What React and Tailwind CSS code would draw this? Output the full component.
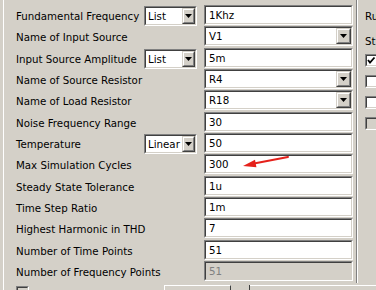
const rows = [
  { label: "Fundamental Frequency", combo: "List", value: "1Khz" },
  { label: "Name of Input Source", value: "V1", select: true },
  { label: "Input Source Amplitude", combo: "List", value: "5m" },
  { label: "Name of Source Resistor", value: "R4", select: true },
  { label: "Name of Load Resistor", value: "R18", select: true },
  { label: "Noise Frequency Range", value: "30" },
  { label: "Temperature", combo: "Linear", value: "50" },
  { label: "Max Simulation Cycles", value: "300" },
  { label: "Steady State Tolerance", value: "1u" },
  { label: "Time Step Ratio", value: "1m" },
  { label: "Highest Harmonic in THD", value: "7" },
  { label: "Number of Time Points", value: "51" },
  { label: "Number of Frequency Points", value: "51", disabled: true },
];

const Sunken = ({ className = "", inner = "", children }) => (
  <div className={`border border-t-[#808080] border-l-[#808080] border-b-white border-r-white ${className}`}>
    <div className={`h-full border border-t-[#404040] border-l-[#404040] border-b-[#d4d0c8] border-r-[#d4d0c8] ${inner}`}>
      {children}
    </div>
  </div>
);

const DropButton = ({ small }) => (
  <div className={`${small ? "w-[13px]" : "w-[15px]"} h-full shrink-0 border border-t-[#d4d0c8] border-l-[#d4d0c8] border-b-[#404040] border-r-[#404040]`}>
    <div className="h-full bg-[#d4d0c8] border border-t-white border-l-white border-b-[#808080] border-r-[#808080] flex items-center justify-center">
      <svg width="7" height="4" viewBox="0 0 7 4">
        <path d="M0 0H7L3.5 4Z" fill="#000" />
      </svg>
    </div>
  </div>
);

const Checkbox = ({ checked, disabled }) => (
  <Sunken className="w-[13px] h-[13px] shrink-0" inner={disabled ? "bg-[#d4d0c8]" : "bg-white"}>
    {checked && (
      <svg width="9" height="9" viewBox="0 0 9 9" className="block">
        <path d="M1 4L3 6.5L7.5 1.5" stroke="#000" strokeWidth="1.8" fill="none" />
      </svg>
    )}
  </Sunken>
);

export default function App() {
  return (
    <div className="relative w-[376px] h-[290px] overflow-hidden bg-[#d4d0c8] text-black text-[10.25px] font-['DejaVu_Sans',sans-serif] flex flex-col">
      <div className="flex h-[283px] shrink-0">
        {/* settings form */}
        <div className="ml-[3px] border-l border-white pl-[12px] pt-[5px] w-[350px] shrink-0">
          {rows.map((r) => (
            <div key={r.label} className="flex items-start h-[21.33px]">
              <div className="w-[128px] shrink-0 leading-[20px] pt-[1px] whitespace-nowrap">{r.label}</div>
              <div className="w-[60px] shrink-0">
                {r.combo && (
                  <Sunken className="w-[53px] h-[20px] mt-[1px]" inner="bg-white flex">
                    <span className="flex-1 pl-[2px] leading-[16px] whitespace-nowrap overflow-hidden">{r.combo}</span>
                    <DropButton small />
                  </Sunken>
                )}
              </div>
              <Sunken
                className="w-[149px] h-[20px]"
                inner={`flex ${r.disabled ? "bg-[#d4d0c8] text-[#808080]" : "bg-white"}`}
              >
                <span className="flex-1 pl-[3px] leading-[17px]">{r.value}</span>
                {r.select && <DropButton />}
              </Sunken>
            </div>
          ))}
        </div>

        {/* splitter */}
        <div className="ml-[3px] w-[2px] border-l border-[#808080] border-r-white border-r" />

        {/* right panel, cut off by the window edge */}
        <div className="pl-[7px] pt-[9px] flex flex-col whitespace-nowrap">
          <div className="leading-[14px]">Ru</div>
          <div className="leading-[14px] mt-[11px]">St</div>
          <div className="mt-[6px] flex flex-col gap-[8px]">
            <Checkbox checked />
            <Checkbox />
            <Checkbox />
            <Checkbox disabled />
          </div>
        </div>
      </div>

      {/* bottom strip */}
      <div className="flex flex-1 ml-[3px] border-l border-white">
        <div className="ml-[12px] mt-[3px]">
          <Checkbox disabled />
        </div>
        <div className="ml-[135px] mt-[2px] w-[67px] h-[20px] border-t border-l border-white border-r border-r-[#404040]" />
        <div className="w-[19px] border-r border-[#404040] mt-[2px]" />
        <div className="flex-1 mt-[2px] border-t border-white" />
      </div>

      {/* red annotation arrow */}
      <svg className="absolute left-0 top-0 pointer-events-none" width="376" height="290">
        <line x1="288" y1="157" x2="254" y2="163.6" stroke="#e5211b" strokeWidth="2" strokeLinecap="round" />
        <polygon points="243,166 256.4,167.2 255,159.8" fill="#e5211b" />
      </svg>
    </div>
  );
}
